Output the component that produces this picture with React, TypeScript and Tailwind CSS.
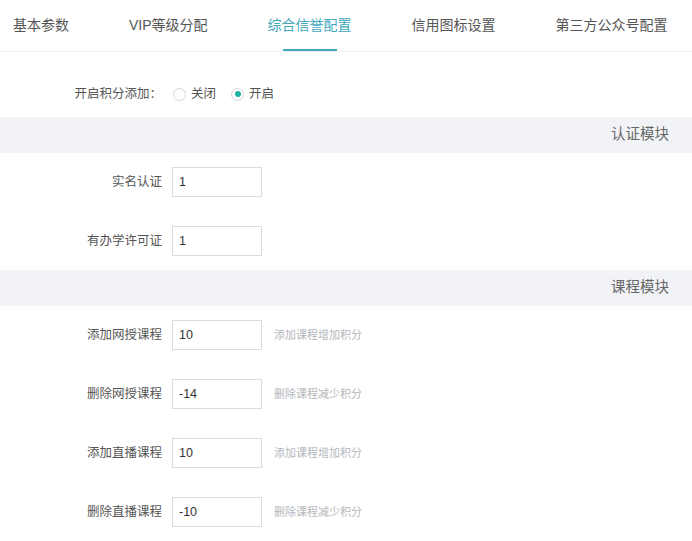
const tabs = ["基本参数", "VIP等级分配", "综合信誉配置", "信用图标设置", "第三方公众号配置"]

function Row({ label, value, hint }: { label: string; value: string; hint?: string }) {
    return (
        <div className="flex items-center h-[30px]">
            <div className="w-[162px] text-right text-[12.5px] text-[#555]">{label}</div>
            <div className="ml-[10px] w-[90px] h-[30px] border border-[#dcdcdc] flex items-center pl-[6px] text-[12.5px] text-[#333]">{value}</div>
            {hint && <div className="ml-[12px] text-[11px] text-[#b4b7bc]">{hint}</div>}
        </div>
    )
}

function Band({ title }: { title: string }) {
    return (
        <div className="h-[36px] bg-[#f2f3f7] flex items-center justify-end pr-[23px] text-[14.5px] text-[#666]">{title}</div>
    )
}

export default function App() {
    return (
        <div className="w-[692px] h-[541px] bg-white overflow-hidden" style={{ fontFamily: '"Liberation Sans", "Noto Sans CJK SC", sans-serif' }}>
            <div className="flex pl-[13px] gap-[60px] h-[52px] border-b border-[#eef0f3]">
                {tabs.map((t, i) => (
                    <div key={t} className="flex flex-col items-center h-[51px]">
                        <div className={`flex-1 flex items-center pt-[2px] text-[14px] ${i === 2 ? "text-[#3fa8bd]" : "text-[#555]"}`}>{t}</div>
                        <div className={`w-[54px] h-[2px] ${i === 2 ? "bg-[#43a7b9]" : "bg-transparent"}`}></div>
                    </div>
                ))}
            </div>

            <div className="flex items-center h-[20px] mt-[32px] mb-[13px]">
                <div className="w-[162px] text-right text-[12.5px] text-[#555]">开启积分添加：</div>
                <div className="ml-[11px] flex items-center">
                    <div className="w-[13px] h-[13px] rounded-full border border-[#d4d6db]"></div>
                    <span className="ml-[5px] text-[12.5px] text-[#555]">关闭</span>
                    <div className="ml-[15px] w-[13px] h-[13px] rounded-full border border-[#d4d6db] flex items-center justify-center">
                        <div className="w-[6px] h-[6px] rounded-full bg-[#22b3a3]"></div>
                    </div>
                    <span className="ml-[5px] text-[12.5px] text-[#555]">开启</span>
                </div>
            </div>

            <Band title="认证模块" />
            <div className="flex flex-col gap-[29px] pt-[14px] pb-[14px]">
                <Row label="实名认证" value="1" />
                <Row label="有办学许可证" value="1" />
            </div>

            <Band title="课程模块" />
            <div className="flex flex-col gap-[29px] pt-[14px]">
                <Row label="添加网授课程" value="10" hint="添加课程增加积分" />
                <Row label="删除网授课程" value="-14" hint="删除课程减少积分" />
                <Row label="添加直播课程" value="10" hint="添加课程增加积分" />
                <Row label="删除直播课程" value="-10" hint="删除课程减少积分" />
            </div>
        </div>
    )
}
